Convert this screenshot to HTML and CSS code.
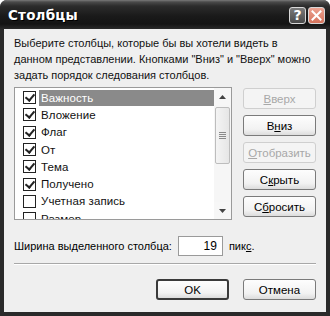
FILE: index.html
```
<!DOCTYPE html>
<html>
<head>
<meta charset="utf-8">
<link rel="stylesheet" href="styles.css">
</head>
<body>
<div class="window">
  <div class="titlebar">
    <span class="title">Столбцы</span>
    <div class="tbtns">
      <span class="tb help">?</span>
      <span class="tb close"><svg width="11" height="11" viewBox="0 0 11 11"><path d="M1.5 1.5 L9.5 9.5 M9.5 1.5 L1.5 9.5" stroke="#fff" stroke-width="2" stroke-linecap="square"/></svg></span>
    </div>
  </div>
  <div class="client">
    <p class="intro">Выберите столбцы, которые бы вы хотели видеть в<br>данном представлении. Кнопками "Вниз" и "Вверх" можно<br>задать порядок следования столбцов.</p>
    <div class="main">
      <div class="listbox">
        <ul class="items">
          <li class="item"><span class="cb on"></span><span class="lbl sel">Важность</span></li>
          <li class="item"><span class="cb on"></span><span class="lbl">Вложение</span></li>
          <li class="item"><span class="cb on"></span><span class="lbl">Флаг</span></li>
          <li class="item"><span class="cb on"></span><span class="lbl">От</span></li>
          <li class="item"><span class="cb on"></span><span class="lbl">Тема</span></li>
          <li class="item"><span class="cb on"></span><span class="lbl">Получено</span></li>
          <li class="item"><span class="cb"></span><span class="lbl">Учетная запись</span></li>
          <li class="item"><span class="cb"></span><span class="lbl">Размер</span></li>
        </ul>
        <div class="scrollbar">
          <div class="sbtn"><svg width="7" height="4" viewBox="0 0 7 4"><path d="M0 4 L3.5 0 L7 4 Z" fill="#444"/></svg></div>
          <div class="track">
            <div class="thumb"><span class="grip"></span><span class="grip"></span><span class="grip"></span><span class="grip"></span></div>
          </div>
          <div class="sbtn"><svg width="7" height="4" viewBox="0 0 7 4"><path d="M0 0 L7 0 L3.5 4 Z" fill="#444"/></svg></div>
        </div>
      </div>
      <div class="side">
        <button class="btn dis"><u>В</u>верх</button>
        <button class="btn">В<u>н</u>из</button>
        <button class="btn dis"><u>О</u>тобразить</button>
        <button class="btn">С<u>к</u>рыть</button>
        <button class="btn">С<u>б</u>росить</button>
      </div>
    </div>
    <div class="widthrow">
      <span class="wlabel">Ширина выделенного столбца:</span>
      <span class="input">19</span>
      <span class="unit">пик<u>с</u>.</span>
    </div>
    <div class="sep"></div>
    <div class="footer">
      <button class="btn def">OK</button>
      <button class="btn">Отмена</button>
    </div>
  </div>
</div>
</body>
</html>
```

FILE: styles.css
```
* { box-sizing: border-box; }
html, body { margin: 0; padding: 0; }
body { width: 330px; height: 316px; overflow: hidden; background: #fff; font-family: "Liberation Sans", Arial, sans-serif; font-size: 11px; color: #000; }

.window {
  width: 330px; height: 316px;
  display: flex; flex-direction: column;
  background: #2a2a2a;
  border-radius: 7px 7px 0 0;
  overflow: hidden;
}
.titlebar {
  height: 29px; flex: none;
  display: flex; align-items: center; justify-content: space-between;
  padding: 0 5px 0 8px;
  background: linear-gradient(to bottom, #7a7a7a 0, #4a4a4a 2px, #2c2c2c 6px, #1a1a1a 16px, #141414 24px, #2a2a2a 29px);
}
.title { color: #fff; font-family: "DejaVu Sans", sans-serif; font-weight: bold; font-size: 13.5px; letter-spacing: 0.2px; text-shadow: 1px 1px 0 #000; }
.tbtns { display: flex; gap: 2px; margin-top: 1px; }
.tb {
  width: 17px; height: 17px; border-radius: 3px;
  display: flex; align-items: center; justify-content: center;
  border: 1px solid #d8d8d8;
}
.help { background: linear-gradient(#7a7a7a, #4a4a4a); color: #fff; font-family: "DejaVu Sans", sans-serif; font-weight: bold; font-size: 14px; line-height: 1; }
.close { background: linear-gradient(#eca392, #d6735c); }

.client {
  flex: 1;
  margin: 0 4px 4px 4px;
  background: #efefef;
  padding: 6px 10px 0 10px;
  display: flex; flex-direction: column;
}
.intro { margin: 0; line-height: 16px; font-size: 11px; color: #111; white-space: nowrap; }

.main { display: flex; gap: 11px; margin-top: 4px; }
.listbox {
  width: 218px; height: 133px;
  border: 1px solid #9a9a9a;
  background: #fff;
  display: flex;
  overflow: hidden;
}
.items { list-style: none; margin: 0; padding: 1px 0 0 0; flex: 1; }
.item { height: 17.3px; display: flex; align-items: center; padding-left: 8px; }
.cb {
  width: 13px; height: 13px; flex: none;
  border: 1px solid #222; background: #fff;
  position: relative;
}
.cb.on::after {
  content: ""; position: absolute; left: 3px; top: 0px;
  width: 4px; height: 7px;
  border: solid #222; border-width: 0 2px 2px 0;
  transform: rotate(40deg);
}
.lbl { margin-left: 3px; padding: 0 2px; height: 16px; line-height: 16px; font-size: 11.5px; letter-spacing: 0.1px; flex: 1; color: #111; }
.lbl.sel { background: #8a8a8a; color: #fff; }

.scrollbar { width: 17px; flex: none; display: flex; flex-direction: column; background: #f6f6f6; }
.sbtn { height: 17px; display: flex; align-items: center; justify-content: center; background: #f7f7f7; }
.track { flex: 1; padding-top: 2px; }
.thumb {
  height: 57px; margin: 0 1px;
  border: 1px solid #bdbdbd; border-radius: 2px;
  background: linear-gradient(to right, #f4f4f4, #e6e6e6);
  display: flex; flex-direction: column; align-items: center; justify-content: center; gap: 1px;
}
.grip { width: 7px; height: 1px; background: #8a8a8a; }

.side { display: flex; flex-direction: column; gap: 6px; padding-top: 1px; }
.btn {
  width: 73px; height: 21px;
  border: 1px solid #7a7a7a; border-radius: 3px;
  background: linear-gradient(#fdfdfd, #f2f2f2 70%, #dcdcdc);
  font-family: "Liberation Sans", Arial, sans-serif; font-size: 11.5px; color: #000;
  padding: 0; display: flex; align-items: center; justify-content: center;
}
.btn.dis { color: #a8a8a8; border-color: #cfcfcf; background: #f4f4f4; }
.btn.def { border: 2px solid #3a3a3a; }

.widthrow { display: flex; align-items: center; margin-top: 16px; height: 20px; font-size: 11px; }
.wlabel { margin-right: 6px; }
.input {
  width: 45px; height: 20px;
  border: 1px solid #9a9a9a; background: #fff;
  text-align: right; padding-right: 5px; line-height: 18px; font-size: 12px;
}
.unit { margin-left: 6px; }

.sep { height: 2px; border-top: 1px solid #a8a8a8; border-bottom: 1px solid #fff; margin-top: 7px; }
.footer { display: flex; justify-content: flex-end; gap: 14px; margin-top: 14px; }
```
